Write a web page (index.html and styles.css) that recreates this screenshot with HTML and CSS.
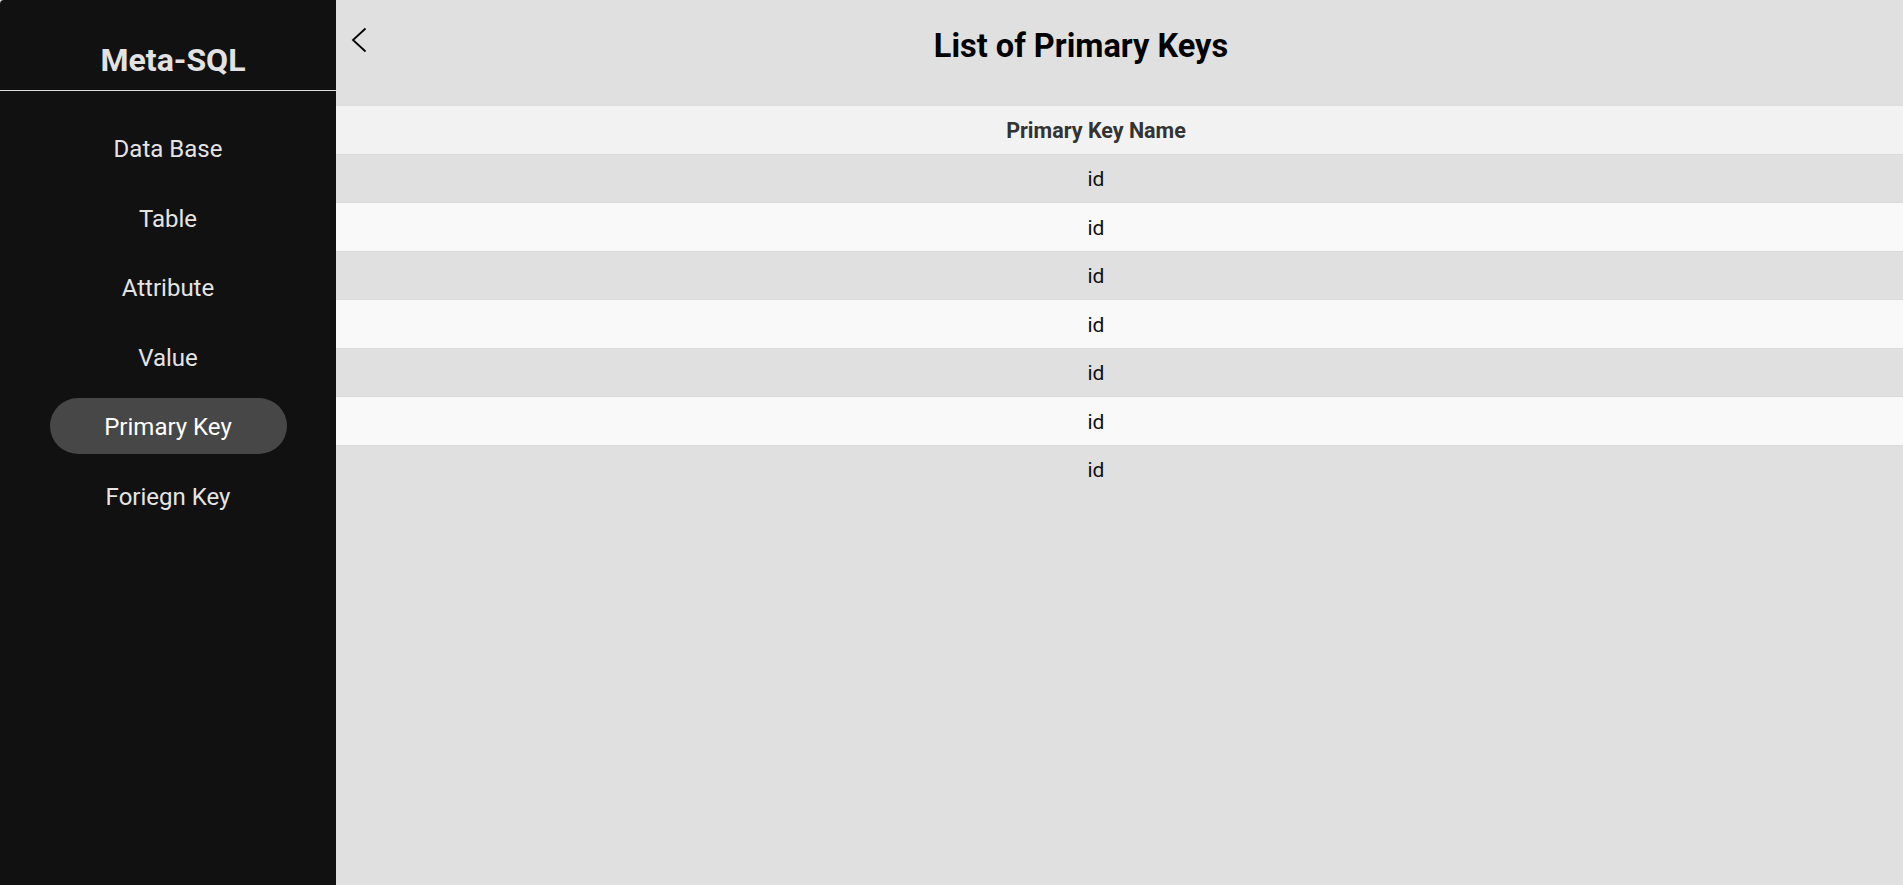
FILE: index.html
```html
<!DOCTYPE html>
<html lang="en">
<head>
<meta charset="utf-8">
<title>Meta-SQL</title>
<link rel="stylesheet" href="styles.css">
</head>
<body>
<div class="app">
  <aside class="sidebar">
    <div class="brand">Meta-SQL</div>
    <nav class="nav">
      <a class="nav-item">Data Base</a>
      <a class="nav-item">Table</a>
      <a class="nav-item">Attribute</a>
      <a class="nav-item">Value</a>
      <a class="nav-item active">Primary Key</a>
      <a class="nav-item">Foriegn Key</a>
    </nav>
  </aside>
  <main class="main">
    <header class="topbar">
      <button class="back" aria-label="Back">
        <svg width="16" height="26" viewBox="0 0 16 26"><polyline points="14.5,1.5 2,13 14.5,24.5" fill="none" stroke="#000" stroke-width="1.8"/></svg>
      </button>
      <h1 class="title">List of Primary Keys</h1>
    </header>
    <div class="table">
      <div class="row head"><span>Primary Key Name</span></div>
      <div class="row odd"><span>id</span></div>
      <div class="row even"><span>id</span></div>
      <div class="row odd"><span>id</span></div>
      <div class="row even"><span>id</span></div>
      <div class="row odd"><span>id</span></div>
      <div class="row even"><span>id</span></div>
      <div class="row odd last"><span>id</span></div>
    </div>
  </main>
</div>
</body>
</html>
```
FILE: styles.css
```css
* { box-sizing: border-box; }
html, body { margin: 0; height: 100%; }
body {
  background: #e0e0e0;
  font-family: Roboto, "Noto Sans", "Liberation Sans", sans-serif;
}
.app {
  display: flex;
  height: 885px;
}
.sidebar {
  width: 336px;
  flex: 0 0 336px;
  background: #111111;
  border-top-left-radius: 4px;
  display: flex;
  flex-direction: column;
}
.brand {
  height: 91px;
  padding-top: 41px;
  padding-left: 10px;
  border-bottom: 1px solid #dcdcdc;
  color: #e2e2e2;
  font-weight: 700;
  font-size: 32px;
  text-align: center;
}
.nav {
  display: flex;
  flex-direction: column;
  align-items: center;
  gap: 13.5px;
  padding-top: 29px;
}
.nav-item {
  width: 237px;
  height: 56px;
  line-height: 56px;
  padding-top: 1px;
  border-radius: 28px;
  text-align: center;
  color: #e4e4e4;
  font-size: 24px;
  cursor: pointer;
}
.nav-item.active {
  background: #474747;
  color: #ffffff;
}
.main {
  flex: 1;
  display: flex;
  flex-direction: column;
  background: #e0e0e0;
}
.topbar {
  height: 106px;
  display: flex;
  align-items: flex-start;
  padding-right: 77px;
}
.back {
  border: 0;
  background: none;
  padding: 0;
  margin: 27px 0 0 15px;
  width: 16px;
  height: 26px;
  cursor: pointer;
}
.back svg { display: block; }
.title {
  flex: 1;
  margin: 0;
  margin-left: -31px;
  padding-top: 27px;
  text-align: center;
  font-size: 32.5px;
  font-weight: 700;
  color: #000;
}
.table {
  display: flex;
  flex-direction: column;
}
.row {
  height: 48.5px;
  border-bottom: 1px solid #d9d9d9;
  display: flex;
  align-items: center;
  justify-content: center;
  padding-top: 2px;
  padding-right: 47px;
  font-size: 21px;
  color: #111;
}
.row.head {
  background: #f2f2f2;
  font-size: 21.5px;
  font-weight: 700;
  color: #333;
}
.row.odd { background: #e0e0e0; }
.row.even { background: #f9f9f9; }
.row.last { border-bottom-color: #e0e0e0; }
```
